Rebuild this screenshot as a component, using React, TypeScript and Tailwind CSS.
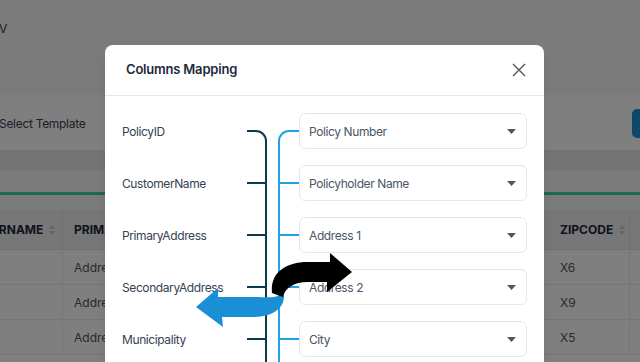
import React from 'react';

const mappings = [
  { source: 'PolicyID', target: 'Policy Number' },
  { source: 'CustomerName', target: 'Policyholder Name' },
  { source: 'PrimaryAddress', target: 'Address 1' },
  { source: 'SecondaryAddress', target: 'Address 2' },
  { source: 'Municipality', target: 'City' },
  { source: 'PostalCode', target: 'Zip Code' },
];

const rows = [
  { addr: 'Address 1', zip: 'X6' },
  { addr: 'Address 2', zip: 'X9' },
  { addr: 'Address 3', zip: 'X5' },
];

function Connector({ first }: { first: boolean }) {
  return (
    <svg width="52" height="52" viewBox="0 0 52 52" className="block">
      {first ? (
        <>
          <path d="M0 26 H9 A10 10 0 0 1 19 36 V52" fill="none" stroke="#0d3a4f" strokeWidth="2" />
          <path d="M52 26 H42 A10 10 0 0 0 32 36 V52" fill="none" stroke="#1ea3e6" strokeWidth="2" />
        </>
      ) : (
        <>
          <path d="M0 26 H19 M19 0 V52" fill="none" stroke="#0d3a4f" strokeWidth="2" />
          <path d="M52 26 H32 M32 0 V52" fill="none" stroke="#1ea3e6" strokeWidth="2" />
        </>
      )}
    </svg>
  );
}

function SortIcon() {
  return (
    <svg width="6" height="10" viewBox="0 0 6 10" className="ml-[6px]">
      <path d="M3 0 L6 4 H0 Z" fill="#c9c9c9" />
      <path d="M3 10 L6 6 H0 Z" fill="#c9c9c9" />
    </svg>
  );
}

export default function App() {
  return (
    <div className="relative h-[362px] w-[640px] overflow-hidden bg-white font-['Inter',sans-serif]">
      {/* page behind the dialog */}
      <div className="flex h-[95px] items-start bg-[#f6f6f6] pt-[20px]">
        <span className="text-[12px] text-gray-700 ml-[-1px]">V</span>
      </div>
      <div className="flex h-[55px] items-center justify-between bg-white pt-[2px]">
        <span className="text-[12px] tracking-[-0.3px] text-gray-700 ml-[-1px]">Select Template</span>
        <div className="h-[29px] w-[40px] translate-x-[32px] rounded-[5px] bg-[#1d8fd8]" />
      </div>
      <div className="h-[20px] bg-[#e9e9e9]" />
      <div className="h-[22px] bg-[#f6f6f6]" />
      <div className="h-[3px] bg-[#38d39c]" />
      <div className="h-[15px] bg-[#f6f6f6]" />

      <div className="ml-[-73px] w-[760px] text-[12px]">
        <div className="flex h-[40px] items-center border-b border-[#e2e2e2] bg-[#eeeeee] pt-[1px] font-bold text-gray-800">
          <div className="flex h-full w-[136px] items-center border-r border-[#dedede] pl-[11px]">
            CUSTOMERNAME
            <SortIcon />
          </div>
          <div className="flex h-full w-[486px] items-center pl-[11px]">PRIMARYADDRESS</div>
          <div className="flex h-full w-[81px] items-center border-r border-[#dedede] pl-[11px]">
            ZIPCODE
            <SortIcon />
          </div>
          <div className="flex-1" />
        </div>
        {rows.map((r) => (
          <div key={r.zip} className="flex h-[35px] items-center border-b border-[#ececec] pt-[1px] text-gray-600">
            <div className="h-full w-[136px] border-r border-[#ececec]" />
            <div className="flex h-full w-[486px] items-center pl-[11px]">{r.addr}</div>
            <div className="flex h-full w-[81px] items-center border-r border-[#ececec] pl-[11px]">{r.zip}</div>
            <div className="flex-1" />
          </div>
        ))}
      </div>

      {/* backdrop */}
      <div className="absolute inset-0 bg-black/50" />

      {/* dialog */}
      <div className="absolute left-[105px] top-[45px] w-[439px] rounded-t-[8px] bg-white shadow-lg">
        <div className="flex h-[51px] items-center justify-between border-b border-[#e5e7eb] pl-[21px] pr-[18px]">
          <h2 className="text-[13px] font-semibold tracking-[-0.2px] text-gray-800">Columns Mapping</h2>
          <svg width="14" height="14" viewBox="0 0 14 14">
            <path d="M1 1 L13 13 M13 1 L1 13" stroke="#555" strokeWidth="1.4" fill="none" />
          </svg>
        </div>
        <div className="px-[17px] pt-[9px]">
          {mappings.map((m, i) => (
            <div key={m.source} className="grid h-[52px] grid-cols-[125px_52px_1fr] items-center">
              <span className="pt-[2px] text-[12px] tracking-[-0.4px] text-gray-700">{m.source}</span>
              <Connector first={i === 0} />
              <div className="flex h-[36px] items-center justify-between rounded-[6px] border border-[#e5e7eb] pl-[9px] pr-[10px] text-[12px] text-gray-600">
                <span className="pt-[2px] tracking-[-0.4px]">{m.target}</span>
                <svg width="9" height="5" viewBox="0 0 9 5">
                  <path d="M0 0 H9 L4.5 5 Z" fill="#555" />
                </svg>
              </div>
            </div>
          ))}
        </div>
      </div>

      {/* annotation arrows */}
      <svg className="pointer-events-none absolute left-0 top-0" width="640" height="362" viewBox="0 0 640 362">
        <path
          d="M283 289 C281 300 270 297 252 297 L218 297 L218 288 L196 307 L223 327 L222 317 L252 317 C272 317 284 309 284 296 Z"
          fill="#1a8fd6"
        />
        <path
          d="M272 293 C270 274 284 262 308 262 L330 262 L330 253 L352 272 L327 292 L327 282 L308 282 C294 282 285 288 283 297 Z"
          fill="#000"
        />
      </svg>
    </div>
  );
}
